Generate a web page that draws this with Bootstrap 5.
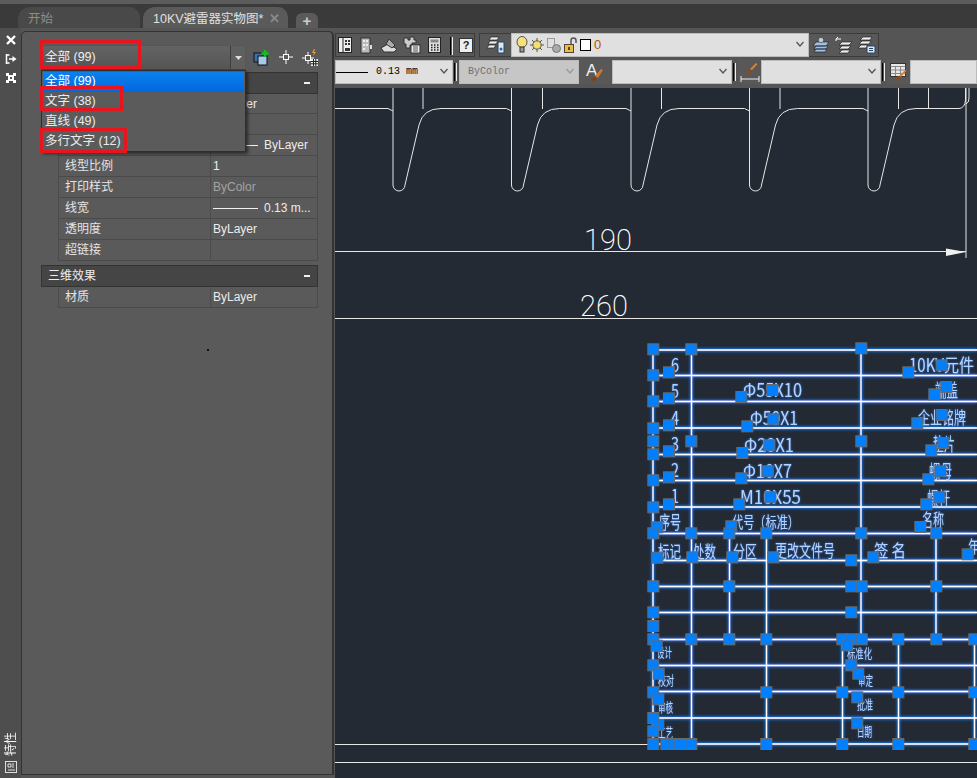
<!DOCTYPE html>
<html lang="zh-CN">
<head>
    <meta charset="UTF-8">
    <meta name="viewport" content="width=device-width, initial-scale=1.0">
    <title>10KV避雷器实物图</title>
    <link href="https://cdn.jsdelivr.net/npm/bootstrap@5.3.0/dist/css/bootstrap.min.css" rel="stylesheet">
    <style>
        html, body { height: 100%; }
        body { background: #555; color: #e6e6e6; overflow: hidden; font: 12px/1.2 "Liberation Sans", "Noto Sans CJK SC", sans-serif; }
        .app-shell { width: 977px; height: 778px; }

        /* file tabs */
        .tab-strip { height: 28px; background: #3a3a3a; border-top: 4px solid #5c5c5c; padding: 3px 0 0 18px; gap: 3px; flex: none; }
        .file-tab { height: 21px; padding: 4px 0 0 10px; border-radius: 12px 10px 0 0; font-size: 12.5px; line-height: 16px; }
        .file-tab-off { width: 122px; background: #494949; color: #8c8c8c; }
        .file-tab-on { width: 145px; background: #5a5a5a; color: #e0e0e0; }
        .tab-close { color: #8a8a8a; font-weight: 700; margin-left: 6px; }
        .tab-add { width: 22px; height: 15px; margin: 6px 0 0 5px; background: #5a5a5a; border-radius: 6px 6px 0 0; color: #ccc; font-weight: 700; font-size: 15px; line-height: 15px; text-align: center; }

        /* palette */
        .side-strip { width: 21px; background: #4e4e4e; padding: 4px 0 5px; flex: none; }
        .side-ico { height: 19px; }
        .side-label { writing-mode: vertical-lr; text-orientation: sideways; transform: rotate(180deg); font-size: 12px; color: #f2f2f2; line-height: 12px; margin-bottom: 5px; }
        .prop-palette { width: 313px; height: 744px; margin-top: 3px; background: #5a5a5a; border: 1px solid #333; border-right-width: 2px; border-radius: 5px 5px 0 0; padding: 13px 14px 0 19px; flex: none; }
        .sel-wrap { height: 25px; margin-bottom: 2px; }
        .sel-box { width: 205px; height: 25px; border: 1px solid #0f62d6; border-bottom-color: #444; background: linear-gradient(#636363, #555); padding-left: 3px; color: #f0f0f0; font-size: 12.5px; line-height: 23px; flex: none; }
        .sel-arrow { width: 15px; height: 23px; border-left: 1px solid #3d3d3d; background: #5f5f5f; }
        .qs-btn { width: 24px; text-align: center; flex: none; }
        .sel-menu { position: absolute; top: 38px; left: 19px; width: 205px; min-width: 0; height: 82px; margin: 0; padding: 1px; background: #5b5b5b; border: 1px solid #2e2e2e; border-radius: 0; box-shadow: 2px 2px 3px rgba(0,0,0,.5); font-size: 12.5px; z-index: 5; }
        .sel-menu .dropdown-item { height: 20px; padding: 0 0 0 2px; color: #ececec; line-height: 19px; background: none; }
        .sel-menu .dropdown-item.active { background: linear-gradient(#0d80ec, #0068e0); color: #fff; }

        .prop-sect { height: 22px; width: 277px; background: #454545; border: 1px solid #333; padding: 0 7px 0 6px; color: #eee; font-size: 12px; line-height: 20px; }
        .prop-minus { width: 6px; height: 2px; background: #f0f0f0; }
        .prop-row { height: 21px; width: 260px; margin-left: 17px; border-left: 1px solid #4c4c4c; border-right: 1px solid #4c4c4c; border-bottom: 1px solid #4a4a4a; line-height: 21px; }
        .prop-row-first { height: 20px; }
        .prop-name { width: 152px; padding-left: 6px; border-right: 1px solid #4c4c4c; color: #e4e4e4; flex: none; }
        .prop-val { padding-left: 2px; color: #ececec; white-space: nowrap; }
        .prop-val-off { color: #a3a3a3; }
        .lw-line { display: inline-block; width: 45px; height: 1px; background: #f0f0f0; vertical-align: middle; margin-right: 6px; }
        .dust { width: 2px; height: 2px; background: #111; margin: 41px 0 0 166px; }

        /* toolbars */
        .draw-side { width: 642px; margin-left: 1px; flex: none; }
        .bar-row { height: 24px; flex: none; }
        .bar-top { margin-top: 5px; }
        .bar-low { margin-top: 3px; }
        .tb-group { height: 24px; border: 1px solid #3b3b3b; background: #585858; }
        .tb-group-draw { width: 140px; }
        .tb-group-layer { width: 400px; }
        .tb-ico { width: 23px; text-align: center; flex: none; }
        .tb-ico-sm { width: 18px; }
        .tb-ico-lg { width: 31px; }
        .tb-sep { width: 3px; height: 18px; border-left: 1px solid #000; border-right: 1px solid #f0f0f0; margin: 3px 2px 0 1px; flex: none; }
        .tb-sep-up { margin: 2px 2px 0; }
        .help-box { width: 14px; height: 15px; background: #eee; border: 1px solid #333; color: #222; font: 700 11px/13px "Liberation Sans", sans-serif; text-align: center; }
        .combo { height: 24px; background: #e0e0e0; border: 1px solid #bbb; color: #000; position: relative; flex: none; }
        .combo-off { background: #c6c6c6; color: #707070; }
        .combo-mono { font: 10px/22px "Liberation Mono", monospace; }
        .combo-chev { position: absolute; right: 4px; top: 7px; }
        .combo-layer { margin-top: -1px; }
        .lay-sun { margin-left: 2px; }
        .lay-frz { margin-left: 3px; }
        .lay-lock { margin-left: 3px; }
        .lay-swatch { width: 11px; height: 12px; margin-left: 2px; background: #fff; border: 1px solid #000; }
        .wl-line { width: 32px; height: 1px; background: #000; }
        .w-sm { width: 118px; }
        .w-md { width: 120px; }
        .tb-iconbox { height: 24px; width: 23px; background: #585858; flex: none; }
        .tb-iconbox-a { width: 33px; }
        .layer-name { color: #b85400; font-size: 13px; line-height: 20px; margin-left: 3px; }
        .cad-view { display: block; background: #232a33; }

        .cad-text { font-family: Roboto, "Liberation Sans", sans-serif; font-weight: 200; fill: #fff; }
        .sel-text { font-family: "Noto Sans CJK SC", "Liberation Sans", sans-serif; fill: #b4d4ff; }
        .icon-letter { font-family: "Liberation Sans", sans-serif; font-size: 17px; fill: #eee; }

        /* red marks on the screenshot */
        .red-mark { position: absolute; border: 3px solid #e8141e; pointer-events: none; z-index: 9; }
        .mark-a { left: 40px; top: 40px; width: 101px; height: 29px; }
        .mark-b { left: 40px; top: 86px; width: 83px; height: 25px; }
        .mark-c { left: 40px; top: 128px; width: 87px; height: 25px; }
    </style>
</head>
<body>
<div class="app-shell position-relative d-flex flex-column">
    <div class="tab-strip d-flex">
        <div class="file-tab file-tab-off">开始</div>
        <div class="file-tab file-tab-on">10KV避雷器实物图*<span class="tab-close">✕</span></div>
        <div class="tab-add">+</div>
    </div>

    <div class="d-flex flex-grow-1">
        <div class="side-strip d-flex flex-column justify-content-between align-items-center">
            <div>
                <div class="side-ico"><svg width="12" height="12" viewBox="0 0 12 12"><path d="M2 2l8 8M10 2l-8 8" stroke="#fff" stroke-width="2.400"/></svg></div>
                <div class="side-ico"><svg width="12" height="12" viewBox="0 0 12 12"><path d="M1.500 1v10M1.500 2h3M1.500 10h3M4 6h4" stroke="#fff" stroke-width="1.500" fill="none"/><path d="M7.500 3l4 3-4 3z" fill="#fff"/></svg></div>
                <div class="side-ico"><svg width="12" height="12" viewBox="0 0 12 12"><path d="M1 1h3v2h4V1h3v3H9v4h2v3H8V9H4v2H1V8h2V4H1z" fill="#fff"/><rect x="5" y="5" width="2" height="2" fill="#555"/></svg></div>
            </div>
            <div class="d-flex flex-column align-items-center">
                <div class="side-label">特性</div>
                <svg width="12" height="12" viewBox="0 0 12 12"><rect x=".5" y=".5" width="11" height="11" fill="none" stroke="#ddd"/><path d="M3 3h3v3H3zM8 2v5M3 9h7" stroke="#ddd" fill="none"/></svg>
            </div>
        </div>

        <div class="prop-palette position-relative">
            <div class="sel-wrap d-flex">
                <div class="sel-box d-flex justify-content-between">
                    <span>全部 (99)</span>
                    <span class="sel-arrow d-flex align-items-center justify-content-center"><svg width="7" height="4"><path d="M0 0h7L3.500 4z" fill="#ddd"/></svg></span>
                </div>
                <div class="qs-btn ms-1 pt-1"><svg width="18" height="18" viewBox="0 0 18 18"><rect x="1" y="4" width="9" height="9" fill="#3c6fa5" stroke="#111"/><rect x="5" y="7" width="9" height="9" fill="#a8c8ea" stroke="#111"/><path d="M12 1v7M8.500 4.500h7" stroke="#10c020" stroke-width="2.600"/></svg></div>
                <div class="qs-btn pt-1"><svg width="16" height="16" viewBox="0 0 16 16"><path d="M8 1v14M1 8h14" stroke="#fff"/><rect x="5.500" y="5.500" width="5" height="5" fill="#5a5a5a" stroke="#fff"/></svg></div>
                <div class="qs-btn pt-1"><svg width="18" height="18" viewBox="0 0 18 18"><path d="M7 3v12M1 9h12" stroke="#fff"/><rect x="4.500" y="6.500" width="5" height="5" fill="#5a5a5a" stroke="#fff"/><path d="M13 0l-2 4h2l-1 3 3-4h-2l1-3z" fill="#f0a020"/><rect x="10" y="10" width="7" height="7" fill="#eee"/><path d="M10 12.500h7M10 14.800h7M12.500 10v7M14.800 10v7" stroke="#222"/></svg></div>
            </div>
            <ul class="dropdown-menu d-block sel-menu list-unstyled">
                <li><a class="dropdown-item active" href="#">全部 (99)</a></li>
                <li><a class="dropdown-item" href="#">文字 (38)</a></li>
                <li><a class="dropdown-item" href="#">直线 (49)</a></li>
                <li><a class="dropdown-item" href="#">多行文字 (12)</a></li>
            </ul>

            <div class="prop-sect d-flex justify-content-between align-items-center">
                <span>常规</span><span class="prop-minus"></span>
            </div>
            <div class="prop-row prop-row-first d-flex"><div class="prop-name">颜色</div><div class="prop-val">ByLayer</div></div>
            <div class="prop-row d-flex"><div class="prop-name">图层</div><div class="prop-val">0</div></div>
            <div class="prop-row d-flex"><div class="prop-name">线型</div><div class="prop-val"><span class="lw-line"></span>ByLayer</div></div>
            <div class="prop-row d-flex"><div class="prop-name">线型比例</div><div class="prop-val">1</div></div>
            <div class="prop-row d-flex"><div class="prop-name">打印样式</div><div class="prop-val prop-val-off">ByColor</div></div>
            <div class="prop-row d-flex"><div class="prop-name">线宽</div><div class="prop-val"><span class="lw-line"></span>0.13 m...</div></div>
            <div class="prop-row d-flex"><div class="prop-name">透明度</div><div class="prop-val">ByLayer</div></div>
            <div class="prop-row d-flex"><div class="prop-name">超链接</div><div class="prop-val"></div></div>
            <div class="prop-sect d-flex justify-content-between align-items-center mt-1">
                <span>三维效果</span><span class="prop-minus"></span>
            </div>
            <div class="prop-row d-flex"><div class="prop-name">材质</div><div class="prop-val">ByLayer</div></div>
            <div class="dust"></div>
        </div>

        <div class="draw-side d-flex flex-column">
            <div class="bar-row bar-top d-flex">
                <div class="tb-group tb-group-draw d-flex align-items-center">
                    <div class="tb-ico tb-ico-sm"><svg width="14" height="16" viewBox="0 0 14 16"><rect x=".5" y=".5" width="13" height="15" fill="#eee" stroke="#222"/><path d="M5 1v14" stroke="#222"/><path d="M7 3h2v2H7zM10 3h2v2h-2zM7 6h2v2H7zM10 6h2v2h-2zM7 11h5v3H7z" fill="#333"/></svg></div>
                    <div class="tb-ico"><svg width="14" height="17" viewBox="0 0 14 17"><rect x="2" y="1" width="9" height="15" fill="#bbb" stroke="#333"/><path d="M4 3h2v2H4zM7 3h2v2H7zM4 7h2v2H4zM7 7h2v2H7zM4 11h2v2H4z" fill="#eee"/><path d="M11 8h2v4h-2" fill="#ddd"/></svg></div>
                    <div class="tb-ico"><svg width="18" height="16" viewBox="0 0 18 16"><path d="M1 11l7-4 9 5-3 3H4z" fill="#ddd" stroke="#333"/><path d="M6 7l3-5 6 6-3 3z" fill="#aaa" stroke="#333"/></svg></div>
                    <div class="tb-ico"><svg width="18" height="18" viewBox="0 0 18 18"><path d="M1 2h4v2h2V1h4v3h2v3h-4v2H7v3H3V8H1z" fill="#ccc" stroke="#333"/><rect x="8" y="9" width="9" height="8" fill="#eee" stroke="#333"/><path d="M10 11h5M10 13h5M10 15h5" stroke="#456"/></svg></div>
                    <div class="tb-ico"><svg width="13" height="16" viewBox="0 0 13 16"><rect x=".5" y=".5" width="12" height="15" fill="#ddd" stroke="#222"/><rect x="2.500" y="2.500" width="8" height="3" fill="#888"/><path d="M3 8h1.500M6 8h1.500M9 8h1.500M3 10.500h1.500M6 10.500h1.500M9 10.500h1.500M3 13h1.500M6 13h1.500M9 13h1.500" stroke="#222" stroke-width="1.400"/></svg></div>
                    <div class="tb-sep tb-sep-up ms-1"></div>
                    <div class="help-box ms-1">?</div>
                </div>
                <div class="tb-group tb-group-layer d-flex align-items-center ms-1">
                    <div class="tb-ico tb-ico-lg"><svg width="18" height="18" viewBox="0 0 18 18"><path d="M4 1h8l-2 3H2zM3 5h8L9 8H1zM2 9h7L7 12H0z" fill="#eee" stroke="#222" stroke-width=".7"/><rect x="11" y="6" width="6" height="11" fill="#dfe8f2" stroke="#246"/><circle cx="14" cy="13" r="1.500" fill="#369"/></svg></div>
                    <div class="combo combo-layer d-flex align-items-center flex-grow-1">
                        <svg width="12" height="18" class="ms-1" viewBox="0 0 12 18"><ellipse cx="6" cy="6" rx="5" ry="5.500" fill="#f6e27a" stroke="#555"/><rect x="4" y="11" width="4" height="5" fill="#999" stroke="#333"/></svg>
                        <svg width="14" height="16" class="lay-sun" viewBox="0 0 14 16"><path d="M7 1v14M0 8h14M2 3l10 10M12 3L2 13" stroke="#555"/><circle cx="7" cy="8" r="4.200" fill="#f6de6a" stroke="#555"/></svg>
                        <svg width="14" height="16" class="lay-frz" viewBox="0 0 14 16"><rect x=".5" y="1.500" width="7" height="9" fill="#e0e0e0" stroke="#999"/><circle cx="9.500" cy="11.500" r="4" fill="#aaa" stroke="#777"/></svg>
                        <svg width="14" height="16" class="lay-lock" viewBox="0 0 14 16"><rect x=".5" y="7.500" width="9" height="8" fill="#e8c040" stroke="#543"/><path d="M7 7V3.500a2.500 2.500 0 0 1 5 0V6" fill="none" stroke="#555" stroke-width="1.500"/><rect x="4" y="10" width="2" height="3" fill="#543"/></svg>
                        <span class="lay-swatch"></span>
                        <span class="layer-name">0</span>
                        <svg class="combo-chev" width="8" height="6" viewBox="0 0 8 6"><path d="M.5 1l3.500 4 3.500-4" fill="none" stroke="#555" stroke-width="1.300"/></svg>
                    </div>
                    <div class="tb-ico"><svg width="18" height="18" viewBox="0 0 18 18"><path d="M4 6h13l-3 4H1zM4 10h12l-2 3H2zM4 13h11l-2 3H2z" fill="#9cc0e8" stroke="#222" stroke-width=".7"/><circle cx="9" cy="4" r="2.600" fill="#ccc" stroke="#333" stroke-width=".5"/></svg></div>
                    <div class="tb-ico"><svg width="18" height="18" viewBox="0 0 18 18"><path d="M7 6h10l-3 3H4zM7 10h9l-3 3H4zM7 14h8l-2 3H4z" fill="#eee" stroke="#222" stroke-width=".7"/><path d="M6 3H1M1 3l2-2M1 3v2" fill="none" stroke="#fff"/></svg></div>
                    <div class="tb-ico"><svg width="18" height="18" viewBox="0 0 18 18"><path d="M5 1h9l-2 3H2zM4 5h9l-2 3H1zM3 9h7l-2 3H0z" fill="#eee" stroke="#222" stroke-width=".7"/><rect x="9" y="10" width="8" height="7" fill="#dfe8f2" stroke="#246"/><path d="M11 12.500h4M11 14.500h4" stroke="#246"/></svg></div>
                </div>
            </div>

            <div class="bar-row bar-low d-flex">
                <div class="combo combo-mono w-sm d-flex align-items-center">
                    <span class="wl-line"></span><span class="ms-1 ps-1">0.13 mm</span>
                    <svg class="combo-chev" width="8" height="6" viewBox="0 0 8 6"><path d="M.5 1l3.500 4 3.500-4" fill="none" stroke="#555" stroke-width="1.300"/></svg>
                </div>
                <div class="tb-sep"></div>
                <div class="combo combo-off combo-mono w-md ps-2">ByColor
                    <svg class="combo-chev" width="8" height="6" viewBox="0 0 8 6"><path d="M.5 1l3.500 4 3.500-4" fill="none" stroke="#999" stroke-width="1.300"/></svg>
                </div>
                <div class="tb-iconbox tb-iconbox-a d-flex align-items-center justify-content-center"><svg width="22" height="22" viewBox="0 0 22 22"><text class="icon-letter" x="1" y="15">A</text><path d="M6 21l4-1 2-3-3-2-2 2z" fill="#7a4420"/><path d="M10 15l6-7 2 1-5 8z" fill="#c87a34"/></svg></div>
                <div class="combo w-md"><svg class="combo-chev" width="8" height="6" viewBox="0 0 8 6"><path d="M.5 1l3.500 4 3.500-4" fill="none" stroke="#555" stroke-width="1.300"/></svg></div>
                <div class="tb-sep"></div>
                <div class="tb-iconbox d-flex align-items-center justify-content-center"><svg width="20" height="21" viewBox="0 0 20 21"><path d="M6 12l4-1 2-3-3-1-2 2z" fill="#8a4a20"/><path d="M10 7l6-6 1.500 1-5.500 6z" fill="#e08030"/><path d="M1 14v6M19 14v6M1 17h18" stroke="#eee"/></svg></div>
                <div class="combo w-md"><svg class="combo-chev" width="8" height="6" viewBox="0 0 8 6"><path d="M.5 1l3.500 4 3.500-4" fill="none" stroke="#555" stroke-width="1.300"/></svg></div>
                <div class="tb-sep"></div>
                <div class="tb-iconbox d-flex align-items-center justify-content-center"><svg width="20" height="20" viewBox="0 0 20 20"><rect x="1.500" y="1.500" width="15" height="13" fill="#e8e8e8" stroke="#333"/><path d="M1.500 4.500h15M1.500 8h15M1.500 11.500h15M6.500 4v10M11.500 4v10" stroke="#888"/><path d="M6 19l4-1 2-3-3-1-2 2z" fill="#8a4a20"/><path d="M10 14l6-6 1.500 1-5.500 6z" fill="#e08030"/></svg></div>
                <div class="combo flex-grow-1"></div>
            </div>

            <svg class="cad-view mt-1" id="cad" width="642" height="690" viewBox="335 88 642 690" xmlns="http://www.w3.org/2000/svg">
                <defs>
                    <filter id="glow" x="-5%" y="-5%" width="110%" height="110%">
                        <feDropShadow dx="0" dy="0" stdDeviation="1.500" flood-color="#1f7bff" flood-opacity="1"/>
                        <feDropShadow dx="0" dy="0" stdDeviation="1" flood-color="#1f7bff" flood-opacity="1"/>
                    </filter>
                    <filter id="glow-txt" x="-20%" y="-20%" width="140%" height="140%">
                        <feDropShadow dx="0" dy="0" stdDeviation="1.300" flood-color="#1f7bff" flood-opacity="1"/>
                    </filter>
                </defs>
                <g id="part" fill="none" stroke="#e6e6e6" stroke-width="1"></g>
                <path d="M946 248.500L966 252l-20 4z" fill="#f0f0f0"/>
                <text class="cad-text" x="584" y="250" font-size="29">190</text>
                <text class="cad-text" x="580" y="316" font-size="29">260</text>
                <path d="M335 744.500H660M335 762.500H977" stroke="#e6e6e6" stroke-width="1.200" fill="none"/>
                <g id="table-lines" filter="url(#glow)" stroke="#fff" stroke-width="1.300" fill="none"></g>
                <g id="table-text" filter="url(#glow-txt)"></g>
                <g id="grips" fill="#0080ff" stroke="#6a6a6a" stroke-width="1"></g>
            </svg>
        </div>
    </div>

    <div class="red-mark mark-a"></div>
    <div class="red-mark mark-b"></div>
    <div class="red-mark mark-c"></div>
</div>

<script src="https://cdn.jsdelivr.net/npm/bootstrap@5.3.0/dist/js/bootstrap.bundle.min.js"></script>
<script>
    const NS = 'http://www.w3.org/2000/svg';

    function add(parent, tag, attrs, text) {
        const el = document.createElementNS(NS, tag);
        Object.keys(attrs).forEach(k => el.setAttribute(k, attrs[k]));
        if (text) el.textContent = text;
        parent.appendChild(el);
    }

    // the five teeth at the top of the part
    const part = document.getElementById('part');
    const teeth = [393, 511.5, 631, 749.5, 868];
    let d = 'M335 108.500H388L393 111';
    teeth.forEach((x, i) => {
        const end = i < 4 ? teeth[i + 1] : 916;
        d += `V185a6 6 0 0 0 12 0L${x + 26} 125Q${x + 30} 108.500 ${x + 48} 108.500`;
        d += i < 4 ? `H${end - 5}L${end} 111` : 'H959Q965 108 965.500 100V88';
    });
    add(part, 'path', { d });
    [393, 423, 511.5, 542.5, 631, 661.5, 749.5, 780, 868, 898.5, 928.5].forEach(x => {
        const h = (x === 393 || x === 511.5 || x === 631 || x === 749.5 || x === 868) ? 111 : 109;
        add(part, 'path', { d: `M${x} 88V${h}` });
    });
    add(part, 'path', { d: 'M335 251.500H966M966 88V258M335 318.500H977' });
    add(part, 'path', { d: 'M969 88V98Q969 103 966 104' });

    // title block lines
    const tl = document.getElementById('table-lines');
    [350, 375.5, 401.5, 428, 454.5, 480.5, 507, 533.5, 560.5, 586.5, 612.5, 639.5, 665.5, 691.5, 718, 744].forEach(y => {
        add(tl, 'path', { d: `M653 ${y}H977` });
    });
    [[653, 350, 744], [691.5, 350, 744], [729.5, 533, 639], [766.5, 533, 744], [861, 350, 639],
     [936, 533, 639], [842.5, 639, 744], [898.5, 639, 744], [974.5, 639, 744]].forEach(v => {
        add(tl, 'path', { d: `M${v[0]} ${v[1]}V${v[2]}` });
    });

    // selected texts: [text, x, baseline, width, size]
    const tt = document.getElementById('table-text');
    [['6', 671, 372, 8, 18], ['5', 671, 398, 8, 18], ['4', 671, 425, 8, 18], ['3', 671, 451, 8, 18],
     ['2', 671, 477, 8, 18], ['1', 671, 503, 8, 18],
     ['10KV元件', 909, 372, 65, 18], ['Φ55X10', 743, 397, 59, 18], ['Φ50X1', 750, 425, 48, 18],
     ['Φ20X1', 744, 452, 50, 18], ['Φ10X7', 743, 478, 49, 18], ['M10X55', 740, 504, 61, 18],
     ['端盖', 935, 397, 23, 18], ['企业铭牌', 918, 424, 48, 17], ['垫片', 933, 451, 22, 18],
     ['螺母', 929, 478, 23, 18], ['螺杆', 927, 505, 23, 18],
     ['序号', 659, 529, 22, 18], ['代号（标准）', 732, 528, 67, 16], ['名称', 922, 527, 22, 18],
     ['标记', 658, 558, 23, 17], ['处数', 693, 558, 23, 17], ['分区', 733, 558, 24, 17],
     ['更改文件号', 775, 557, 60, 17], ['签 名', 874, 557, 32, 17], ['年', 968, 553, 12, 17],
     ['设计', 657, 657, 15, 13], ['校对', 658, 685, 16, 13], ['审核', 658, 712, 15, 13], ['工艺', 658, 737, 15, 13],
     ['标准化', 847, 658, 25, 13], ['审定', 858, 685, 15, 13], ['批准', 857, 709, 16, 13], ['日期', 857, 736, 15, 13]
    ].forEach(t => {
        add(tt, 'text', { class: 'sel-text', x: t[1], y: t[2], 'font-size': t[4], textLength: t[3], lengthAdjust: 'spacingAndGlyphs' }, t[0]);
    });

    // grips, taken from zoomed crops (3x, origin 640,335 and 640,560)
    const upper = [[40,43],[154,43],[664,40],[40,121],[87,112],[805,112],[905,91],[40,199],[87,190],[304,186],[397,165],[883,178],[919,156],
        [40,280],[87,271],[322,274],[400,253],[832,265],[905,240],[40,319],[154,319],[664,319],[40,358],[87,349],[307,354],[388,331],[874,346],[910,324],
        [40,436],[87,427],[304,430],[383,409],[865,433],[901,409],[40,517],[87,508],[298,508],[391,487],[859,508],[898,487],
        [52,577],[274,574],[841,576],[40,595],[154,595],[268,595],[379,595],[664,595],[889,595],
        [52,668],[157,667],[277,667],[400,667],[634,676],[700,667],[983,658]];
    const lower = [[40,79],[268,79],[634,79],[665,79],[889,79],[40,157],[634,157],[40,198],
        [40,238],[154,238],[268,238],[379,238],[607,238],[634,238],[665,238],[775,238],[889,238],[1003,238],
        [50,257],[622,256],[40,316],[634,316],[56,341],[655,341],
        [40,397],[379,397],[607,397],[775,397],[1003,397],[55,418],[652,412],
        [55,495],[652,490],[40,474],[40,514],
        [40,552],[79,552],[100,552],[121,552],[154,552],[379,552],[607,552],[775,552],[1003,552]];
    const grips = document.getElementById('grips');
    upper.forEach(g => add(grips, 'rect', { x: 640 + g[0] / 3 - 5.5, y: 335 + g[1] / 3 - 5.5, width: 11, height: 11 }));
    lower.forEach(g => add(grips, 'rect', { x: 640 + g[0] / 3 - 5.5, y: 560 + g[1] / 3 - 5.5, width: 11, height: 11 }));
</script>
</body>
</html>
